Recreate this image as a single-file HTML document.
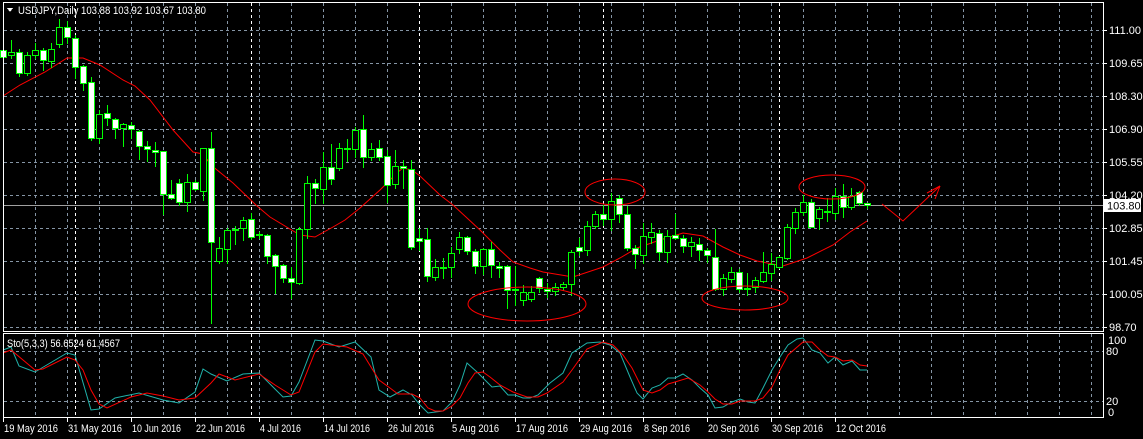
<!DOCTYPE html>
<html><head><meta charset="utf-8">
<style>
html,body{margin:0;padding:0;background:#000;width:1143px;height:439px;overflow:hidden}
svg{display:block}
text{font-family:"Liberation Sans",sans-serif;font-size:11px;fill:#fff}
</style></head>
<body>
<svg id="c" width="1143" height="439" viewBox="0 0 1143 439" xmlns="http://www.w3.org/2000/svg" shape-rendering="crispEdges">
<rect width="1143" height="439" fill="#000"/>
<g id="grid"></g>
<line x1="3" y1="205.5" x2="1103" y2="205.5" stroke="#a0a0a0" stroke-width="1"/>
<polyline fill="none" stroke="#ff0000" stroke-width="1" shape-rendering="auto" points="3,96 20,85 45,72 67,58 83,58 100,65 123,80 135,86 150,100 173,130 193,152 203,154 211,165 233,183 257,206 270,217 300,235 315,237 333,227 345,220 360,208 380,190 398,172 403,168 412,170 420,176 440,195 453,205 480,230 500,250 513,262 530,268 543,272 573,277 603,267 620,258 637,248 660,240 683,233 703,236 723,247 740,255 757,261 783,266 807,258 833,245 850,232 867,221"/>
<g id="candles"></g>
<g fill="none" stroke="#ff0000" stroke-width="1" shape-rendering="auto">
<ellipse cx="527" cy="304" rx="59" ry="17"/>
<ellipse cx="615" cy="192" rx="30" ry="13"/>
<ellipse cx="745" cy="298" rx="43" ry="12"/>
<ellipse cx="832" cy="187" rx="33" ry="12"/>
<polyline points="882,204 903,221 940,186"/>
<line x1="940" y1="186" x2="927" y2="193"/>
<line x1="940" y1="186" x2="935" y2="199"/>
</g>
<!-- stochastic -->
<polyline fill="none" stroke="#20b2aa" stroke-width="1" shape-rendering="auto" points="3,350 11,347 19,366 35,372 67,353 75,355 91,410 99,409 115,398 139,393 163,400 179,403 195,392 203,369 211,374 227,381 243,374 259,373 275,389 283,397 291,396 299,382 315,340 323,341 339,347 355,342 371,357 379,390 390,397 403,390 412,395 420,405 428,413 443,411 452,402 460,385 467,363 477,372 485,380 492,387 500,386 508,395 515,395 523,398 530,398 538,395 550,383 563,373 572,353 587,343 600,342 610,345 620,353 630,377 637,393 643,399 652,388 660,385 668,378 675,378 683,374 692,380 700,388 708,395 715,408 723,407 732,402 740,399 748,402 755,403 763,388 772,370 780,357 788,345 797,339 803,338 812,350 820,353 828,363 835,357 843,365 852,361 860,370 867,370"/>
<polyline fill="none" stroke="#ff0000" stroke-width="1" shape-rendering="auto" points="3,353 11,350 35,370 43,369 67,357 75,360 83,370 91,390 99,404 107,408 131,397 147,393 163,396 179,400 195,398 211,383 219,374 235,380 259,374 275,385 291,395 299,392 315,352 323,344 347,347 363,354 379,380 390,388 398,394 412,394 420,398 428,408 435,411 443,411 452,406 460,398 468,383 475,373 483,372 490,377 500,385 513,392 527,397 538,397 547,393 563,382 572,370 587,349 603,342 613,345 623,355 632,368 643,390 652,393 660,390 668,384 675,382 688,378 700,385 708,392 715,399 723,404 732,404 740,401 755,401 763,398 772,387 780,370 788,355 803,342 812,342 820,350 828,356 835,357 843,361 852,360 860,365 867,366"/>
<!-- frames -->
<rect x="3.5" y="2.5" width="1100" height="329" fill="none" stroke="#fff"/>
<rect x="3.5" y="333.5" width="1100" height="84" fill="none" stroke="#fff"/>
<!-- title -->
<polygon points="7,8 13,8 10,12" fill="#fff"/>
<text x="18" y="14" textLength="188" lengthAdjust="spacingAndGlyphs">USDJPY,Daily  103.88 103.92 103.67 103.80</text>
<text x="7" y="347" textLength="113" lengthAdjust="spacingAndGlyphs">Sto(5,3,3) 56.6524 61.4567</text>
<g id="axis"></g>
<rect x="1104" y="199" width="37" height="13" fill="#fff"/>
<text x="1107" y="209.5" style="fill:#000">103.80</text>
</svg>
<script>
(function(){
var s='';
var g=document.getElementById('grid');
var hy=[30,63,96,129,162,195,228,261,294,327];
for(var i=0;i<hy.length;i++) s+='<line x1="4" y1="'+(hy[i]+.5)+'" x2="1103" y2="'+(hy[i]+.5)+'" stroke="#8595a5" stroke-dasharray="3,3"/>';
[351,401].forEach(function(y){s+='<line x1="4" y1="'+(y+.5)+'" x2="1103" y2="'+(y+.5)+'" stroke="#8595a5" stroke-dasharray="3,3"/>';});
for(var x=35;x<=1091;x+=32){
 s+='<line x1="'+(x+.5)+'" y1="3" x2="'+(x+.5)+'" y2="331" stroke="#8595a5" stroke-dasharray="3,3"/>';
 s+='<line x1="'+(x+.5)+'" y1="334" x2="'+(x+.5)+'" y2="417" stroke="#8595a5" stroke-dasharray="3,3"/>';
}
[75,251,419,603,779].forEach(function(x){
 s+='<line x1="'+(x+.5)+'" y1="3" x2="'+(x+.5)+'" y2="331" stroke="#fff" stroke-dasharray="3,3"/>';
 s+='<line x1="'+(x+.5)+'" y1="334" x2="'+(x+.5)+'" y2="417" stroke="#fff" stroke-dasharray="3,3"/>';
});
g.innerHTML=s;
var D="w50,57,45,62|b52,55,40,58|w52,73,49,76|b55,73,52,75|b50,55,43,58|w50,60,48,70|b49,61,43,67|b27,44,19,47|w27,37,21,43|w38,67,35,78|w66,83,65,90|w82,138,77,140|b114,138,110,143|w113,118,105,125|w119,128,118,138|b124,128,123,146|w125,129,122,138|w131,146,130,159|w146,149,141,161|w150,152,142,166|w151,194,151,214|w194,198,180,199|w183,202,179,205|b182,202,174,211|w182,189,180,190|b148,191,148,200|w148,242,132,323|b248,261,237,263|b230,249,228,263|w229,230,226,244|b220,228,217,240|w219,237,213,239|w234,235,232,238|w235,256,234,263|w255,266,254,293|w265,278,264,282|w278,282,267,298|b229,283,227,284|b183,229,176,238|w183,188,179,203|b167,189,152,203|w167,179,144,184|b148,168,143,170|w148,149,139,161|b130,149,127,157|w129,157,115,167|b149,157,143,160|w148,157,140,160|w156,185,150,202|b166,184,150,188|w166,168,160,188|w169,247,160,249|w238,241,228,250|w239,276,228,281|b267,277,259,280|w267,268,258,278|b253,267,247,277|b237,249,232,253|w237,251,236,254|w251,266,249,273|b249,266,248,274|w249,265,242,277|w266,268,262,277|w266,290,265,308|w289,290,266,305|b292,300,285,305|b292,299,286,301|w278,288,277,292|w289,291,283,297|b287,291,283,295|b284,287,282,290|b252,284,250,295|w247,251,238,255|b226,250,221,255|b214,226,211,228|w214,219,205,225|b201,219,193,230|w198,214,195,222|w214,248,206,250|w248,254,245,268|b236,255,223,263|b232,237,223,243|w233,252,230,260|b236,252,230,262|w235,238,214,239|w238,246,235,252|b242,246,237,256|w244,250,238,260|w250,255,248,262|w257,289,229,290|b278,289,274,295|b272,279,267,282|w272,289,269,292|w288,289,273,295|b280,287,277,292|b272,281,252,282|b264,273,253,280|b257,267,256,268|b227,258,224,259|b212,228,208,233|b202,212,195,215|w202,227,199,227|b209,218,207,229|w211,212,198,221|b196,213,188,219|w196,207,184,217|b196,207,188,209|w192,203,191,205|w203,205,203,208".split('|');
s='';
for(var k=0;k<D.length;k++){
 var t=D[k][0],v=D[k].slice(1).split(',').map(Number),x=3+8*k;
 s+='<line x1="'+(x+.5)+'" y1="'+v[2]+'" x2="'+(x+.5)+'" y2="'+(v[3]+1)+'" stroke="#00ff00"/>';
 var h=Math.max(v[1]-v[0],1);
 s+='<rect x="'+(x-2.5)+'" y="'+(v[0]+.5)+'" width="6" height="'+h+'" fill="'+(t=='w'?'#fff':'#000')+'" stroke="#00ff00"/>';
}
document.getElementById('candles').innerHTML=s;
s='';
var L=["111.00","109.65","108.30","106.90","105.55","104.20","102.85","101.45","100.05","98.70"];
for(i=0;i<L.length;i++){s+='<line x1="1103" y1="'+(hy[i]+.5)+'" x2="1107" y2="'+(hy[i]+.5)+'" stroke="#fff"/><text x="1109" y="'+(hy[i]+4)+'">'+L[i]+'</text>';}
s+='<text x="1108" y="344">100</text><text x="1106" y="355">80</text><text x="1106" y="405">20</text><text x="1108" y="416">0</text>';
var dl=[[3,"19 May 2016",54],[67,"31 May 2016",54],[131,"10 Jun 2016",49],[195,"22 Jun 2016",49],[259,"4 Jul 2016",41],[323,"14 Jul 2016",46],[387,"26 Jul 2016",46],[451,"5 Aug 2016",47],[515,"17 Aug 2016",52],[579,"29 Aug 2016",52],[643,"8 Sep 2016",46],[707,"20 Sep 2016",51],[771,"30 Sep 2016",51],[835,"12 Oct 2016",50]];
dl.forEach(function(d){s+='<line x1="'+(d[0]+.5)+'" y1="418" x2="'+(d[0]+.5)+'" y2="422" stroke="#fff"/><text x="'+(d[0]+1)+'" y="432" textLength="'+d[2]+'" lengthAdjust="spacingAndGlyphs">'+d[1]+'</text>';});
document.getElementById('axis').innerHTML=s;
})();
</script>
</body></html>
